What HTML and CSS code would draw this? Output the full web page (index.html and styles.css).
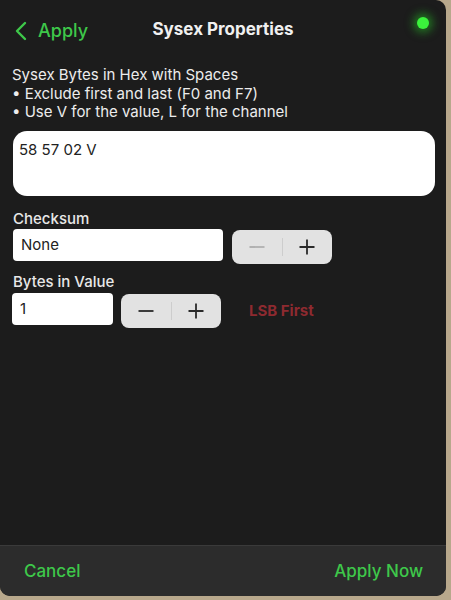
FILE: index.html
```html
<!DOCTYPE html>
<html lang="en">
<head>
    <meta charset="UTF-8">
    <meta name="viewport" content="width=device-width, initial-scale=1.0">
    <title>Sysex Properties</title>
    <link rel="stylesheet" href="styles.css">
</head>
<body>
    <div class="panel">
        <div class="header">
            <a class="back">
                <svg width="14" height="20" viewBox="0 0 14 20"><path d="M11 2 L3 10 L11 18" fill="none" stroke="#3ec84a" stroke-width="2.4" stroke-linecap="round" stroke-linejoin="round"/></svg>
                <span>Apply</span>
            </a>
            <div class="title">Sysex Properties</div>
            <div class="led"></div>
        </div>

        <div class="content">
            <div class="help">
                Sysex Bytes in Hex with Spaces<br>
                • Exclude first and last (F0 and F7)<br>
                • Use V for the value, L for the channel
            </div>
            <div class="textarea">58 57 02 V</div>

            <div class="label">Checksum</div>
            <div class="row">
                <div class="field wide">None</div>
                <div class="stepper">
                    <span class="step"><svg width="16" height="16" viewBox="0 0 16 16"><path d="M0.5 8 H15.5" stroke="#a6a6a6" stroke-width="1.6"/></svg></span>
                    <span class="sep"></span>
                    <span class="step"><svg width="16" height="16" viewBox="0 0 16 16"><path d="M0.5 8 H15.5 M8 0.5 V15.5" stroke="#2a2a2a" stroke-width="1.8"/></svg></span>
                </div>
            </div>

            <div class="label second">Bytes in Value</div>
            <div class="row">
                <div class="field narrow">1</div>
                <div class="stepper">
                    <span class="step"><svg width="16" height="16" viewBox="0 0 16 16"><path d="M0.5 8 H15.5" stroke="#2a2a2a" stroke-width="1.8"/></svg></span>
                    <span class="sep"></span>
                    <span class="step"><svg width="16" height="16" viewBox="0 0 16 16"><path d="M0.5 8 H15.5 M8 0.5 V15.5" stroke="#2a2a2a" stroke-width="1.8"/></svg></span>
                </div>
                <div class="lsb">LSB First</div>
            </div>
        </div>

        <div class="footer">
            <span>Cancel</span>
            <span>Apply Now</span>
        </div>
    </div>
</body>
</html>
```

FILE: styles.css
```css
body {
    margin: 0;
    background: #b8a88c;
    font-family: Inter, "Liberation Sans", sans-serif;
    width: 451px;
    height: 600px;
    overflow: hidden;
}
.panel {
    width: 446px;
    height: 596px;
    background: #1c1c1c;
    border-radius: 0 10px 10px 10px;
    display: flex;
    flex-direction: column;
    overflow: hidden;
}
.header {
    height: 60px;
    display: flex;
    align-items: center;
    position: relative;
    padding: 0 0 0 14px;
}
.back {
    display: flex;
    align-items: center;
    gap: 10px;
    color: #3ec84a;
    font-size: 18px;
    font-weight: 500;
    margin-top: 1px;
}
.title {
    position: absolute;
    left: 0;
    right: 0;
    top: 19px;
    text-align: center;
    color: #f0f0f0;
    font-weight: bold;
    font-size: 17px;
    pointer-events: none;
}
.led {
    position: absolute;
    right: 17px;
    top: 17px;
    width: 12px;
    height: 12px;
    border-radius: 50%;
    background: #3bf23c;
    box-shadow: 0 0 8px 4px rgba(40, 200, 40, 0.5);
}
.content {
    flex: 1;
    padding: 6px 11px 0 12px;
}
.help {
    color: #ececec;
    font-size: 15px;
    line-height: 18.5px;
}
.textarea {
    margin: 9px 0 0 1px;
    height: 65px;
    background: #fff;
    border-radius: 14px;
    box-sizing: border-box;
    padding: 9px 6px;
    color: #222;
    font-size: 15px;
}
.label {
    color: #e8e8e8;
    font-size: 15px;
    font-weight: 500;
    margin: 14px 0 0 1px;
    height: 18px;
    line-height: 18px;
}
.label.second {
    margin-top: 9px;
}
.row {
    display: flex;
    align-items: flex-start;
    margin-top: 1px;
}
.field {
    background: #fff;
    border-radius: 4px;
    height: 32px;
    box-sizing: border-box;
    padding: 0 8px;
    display: flex;
    align-items: center;
    color: #222;
    font-size: 15px;
}
.wide {
    width: 210px;
    margin-left: 1px;
}
.narrow {
    width: 101px;
    margin-top: 1px;
}
.stepper {
    width: 100px;
    height: 34px;
    background: #e2e2e2;
    border-radius: 8px;
    margin: 1px 0 0 9px;
    display: flex;
    align-items: center;
}
.narrow + .stepper {
    margin: 2px 0 0 8px;
}
.step {
    flex: 1;
    display: flex;
    justify-content: center;
    align-items: center;
    height: 34px;
}
.sep {
    width: 1px;
    height: 18px;
    background: #cdcdcd;
}
.lsb {
    margin: 9px 0 0 28px;
    color: #8e2a30;
    font-weight: bold;
    font-size: 15px;
}
.footer {
    height: 50px;
    background: #2c2c2c;
    border-top: 1px solid #3a3a3a;
    display: flex;
    justify-content: space-between;
    align-items: center;
    padding: 0 23px 0 24px;
    color: #3ec84a;
    font-size: 17px;
    font-weight: 500;
}
```
